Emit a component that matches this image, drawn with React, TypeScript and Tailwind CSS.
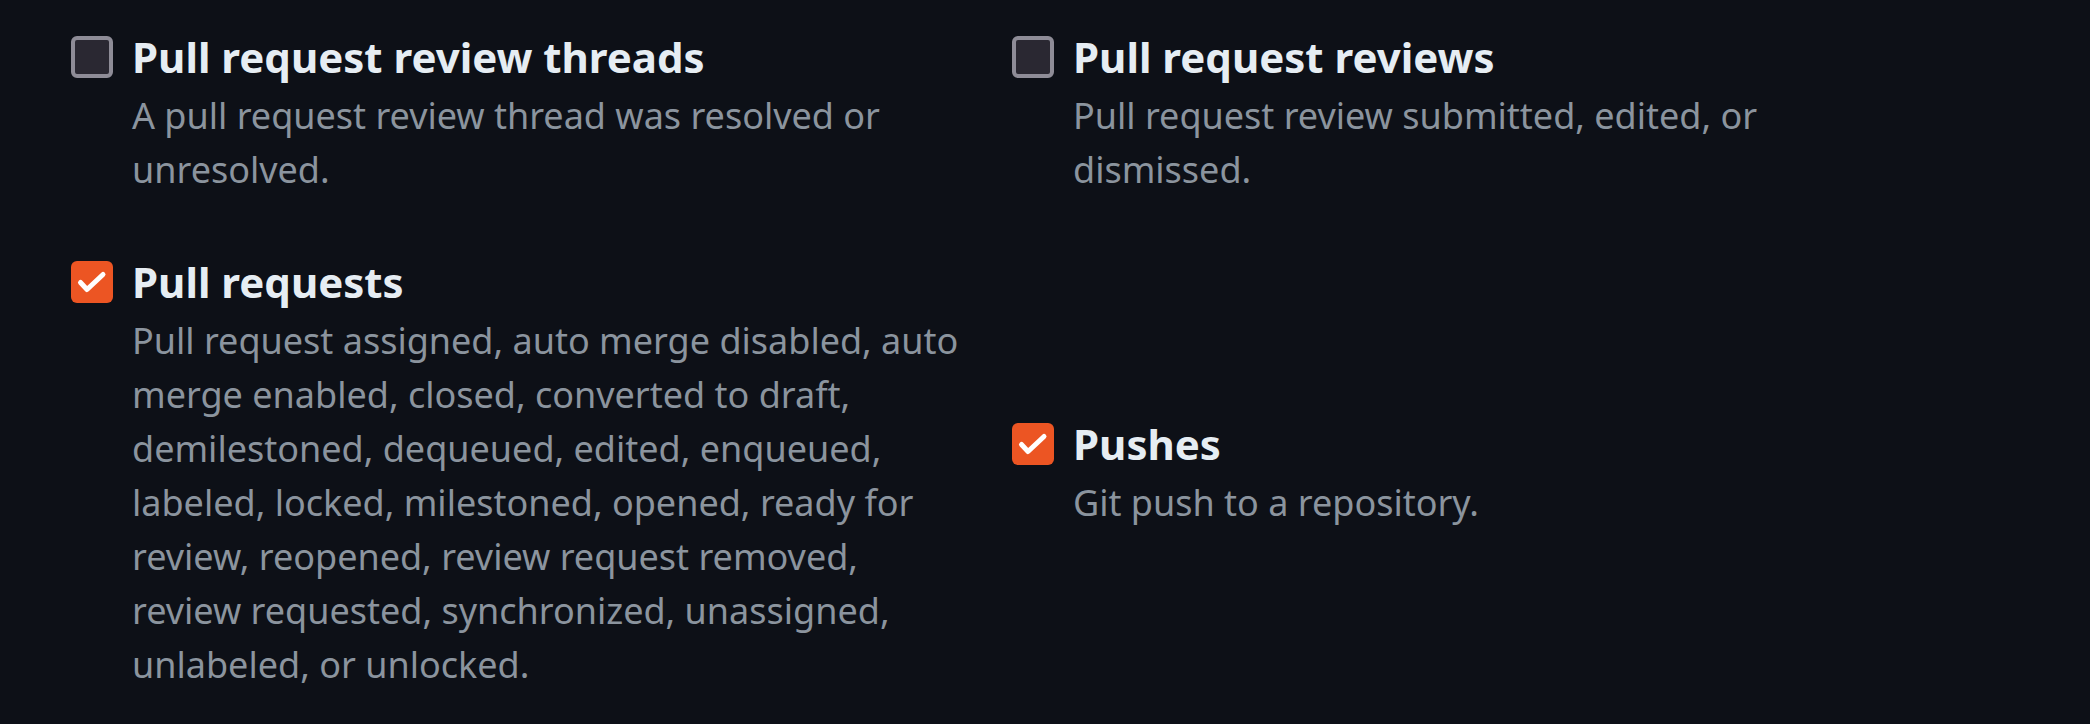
import React from 'react';

type Item = {
  id: string;
  title: string;
  desc: string;
  checked: boolean;
};

const items: Item[] = [
  {
    id: 'pull_request_review_thread',
    title: 'Pull request review threads',
    desc: 'A pull request review thread was resolved or unresolved.',
    checked: false,
  },
  {
    id: 'pull_request_review',
    title: 'Pull request reviews',
    desc: 'Pull request review submitted, edited, or dismissed.',
    checked: false,
  },
  {
    id: 'pull_request',
    title: 'Pull requests',
    desc: 'Pull request assigned, auto merge disabled, auto merge enabled, closed, converted to draft, demilestoned, dequeued, edited, enqueued, labeled, locked, milestoned, opened, ready for review, reopened, review request removed, review requested, synchronized, unassigned, unlabeled, or unlocked.',
    checked: true,
  },
  {
    id: 'push',
    title: 'Pushes',
    desc: 'Git push to a repository.',
    checked: true,
  },
];

const Checkbox = ({ checked }: { checked: boolean }) =>
  checked ? (
    <span className="flex h-[42px] w-[42px] shrink-0 items-center justify-center rounded-[6px] bg-[#ec5523]">
      <svg width="42" height="42" viewBox="0 0 42 42" fill="none">
        <path d="M9.5 21.5l6.5 7L32 13.5" stroke="#ffffff" strokeWidth="5" strokeLinecap="round" strokeLinejoin="round" />
      </svg>
    </span>
  ) : (
    <span className="h-[42px] w-[42px] shrink-0 rounded-[6px] border-[4px] border-[#8e8c97] bg-[#2a2832]" />
  );

const EventOption = ({ item }: { item: Item }) => (
  <div className="flex flex-col">
    {/* checkbox sits on the title line */}
    <label className="flex items-center gap-[19px]">
      <Checkbox checked={item.checked} />
      <span className="text-[42px] font-bold leading-[64px] text-[#e6edf3]">{item.title}</span>
    </label>
    <p className="pl-[61px] text-[36px] leading-[54px] text-[#8b949e]">{item.desc}</p>
  </div>
);

export default function App() {
  return (
    <div
      className="min-h-screen bg-[#0d1017] pl-[71px] pt-[25px]"
      style={{ fontFamily: '"Noto Sans", sans-serif' }}
    >
      <div className="grid grid-cols-[894px_894px] items-center gap-x-[47px] gap-y-[53px]">
        {items.map((item) => (
          <EventOption key={item.id} item={item} />
        ))}
      </div>
    </div>
  );
}
